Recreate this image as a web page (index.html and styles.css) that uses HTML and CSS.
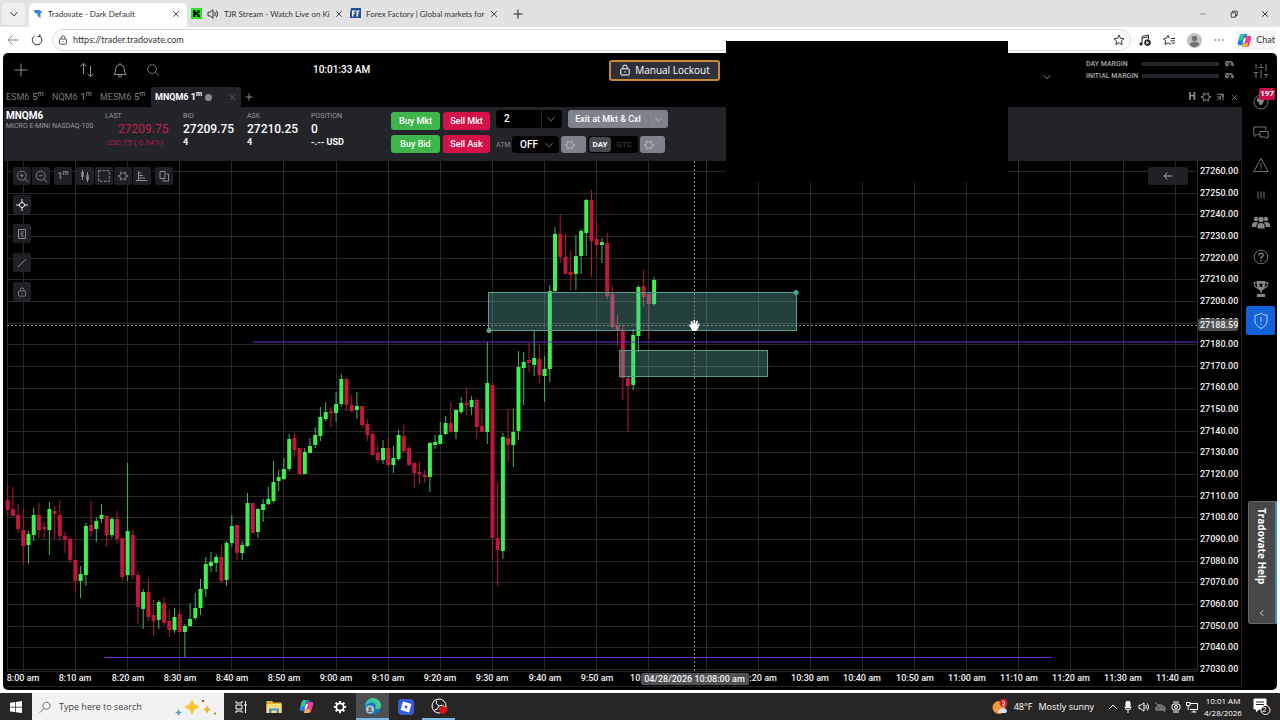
FILE: index.html
```html
<!DOCTYPE html>
<html lang="en">
<head>
<meta charset="utf-8">
<title>Tradovate - Dark Default</title>
<link rel="stylesheet" href="styles.css">
</head>
<body>
<svg class="defs" width="0" height="0" aria-hidden="true">
  <defs>
    <symbol id="chev" viewBox="0 0 10 10"><path d="M1.5 3.2 5 6.8 8.5 3.2"/></symbol>
    <symbol id="x" viewBox="0 0 10 10"><path d="M1.5 1.5 8.500 8.500M8.500 1.500 1.500 8.500"/></symbol>
    <symbol id="plus" viewBox="0 0 10 10"><path d="M5 .5V9.500M.5 5H9.500"/></symbol>
    <symbol id="search" viewBox="0 0 16 16"><circle cx="7" cy="7" r="5"/><path d="M10.700 10.700 14.500 14.500"/></symbol>
    <symbol id="lock" viewBox="0 0 12 12"><rect x="1.800" y="4.800" width="8.400" height="6.200" rx="1"/><path d="M3.800 4.800V3.200a2.200 2.200 0 0 1 4.400 0V4.800M6 7.200V8.600"/></symbol>
    <symbol id="gear" viewBox="0 0 16 16"><path stroke-width="1.500" d="M12 6.600 15.200 7V9L12 9.400 11.200 10.900 12.500 13.700 10.700 14.700 8.900 12.200H7.100L5.300 14.700 3.500 13.700 4.800 10.900 4 9.400.8 9V7L4 6.600 4.800 5.100 3.500 2.300 5.300 1.300 7.100 3.800H8.900L10.700 1.300 12.500 2.300 11.200 5.100Z"/></symbol>
    <symbol id="star" viewBox="0 0 12 12"><path d="M6 1 7.500 4.300 11 4.700 8.400 7.100 9.100 10.600 6 8.900 2.900 10.600 3.600 7.100 1 4.700 4.500 4.300Z"/></symbol>
    <symbol id="copilot" viewBox="0 0 16 16">
      <path fill="#1c7fe0" stroke="none" d="M5.500 1H11L8 11.500Q7.500 13 6 13H3Q0 13 1 9.500L3 3Q3.600 1 5.500 1Z"/>
      <path fill="#35c28e" stroke="none" d="M1.500 8 3 3Q3.600 1 5.500 1H8L6 8Z"/>
      <path fill="#e6438f" stroke="none" d="M10 3h3q3 0 2 3.500l-2 6.500q-.6 2-2.500 2H5.500L8.500 5Q9 3 10 3Z"/>
      <path fill="#ffad4a" stroke="none" d="M6 11h6l-.8 2.500Q10.500 15 9 15H5.500Z"/>
      <path fill="#fff" stroke="none" d="M7.500 5.500H9.500L8 10.500H6Z"/>
    </symbol>
  </defs>
</svg>

<header class="tabstrip">
  <button class="tab-list" aria-label="Tab list"><svg class="i10"><use href="#chev"/></svg></button>
  <div class="btab active">
    <svg class="i10 flat" viewBox="0 0 10 10"><path fill="#3f7fdc" d="M.5 1H6.500L9.500 3 7.500 4V9L4.500 7V4.500L2.500 4.500Z"/></svg>
    <span>Tradovate - Dark Default</span>
    <button aria-label="Close tab"><svg class="i8"><use href="#x"/></svg></button>
  </div>
  <div class="btab stream">
    <svg class="i11 flat" viewBox="0 0 11 11"><path fill="#2be323" d="M0 0H11V11H0Z"/><path fill="#071b07" d="M2 2H4.500V4H6V2.500H9V4.500H7.500V6.500H9V9H6V7H4.500V9H2Z"/></svg>
    <svg class="i12" viewBox="0 0 12 12"><path d="M1 4.200H3L6 1.800V10.200L3 7.800H1ZM7.800 4q1 2 0 4M9.500 2.500q2 3.500 0 7"/></svg>
    <span>TJR Stream - Watch Live on Ki</span>
    <button aria-label="Close tab"><svg class="i8"><use href="#x"/></svg></button>
  </div>
  <div class="btab forex">
    <svg class="i11 flat" viewBox="0 0 11 11"><path fill="#264f91" d="M1 0H11V10H0V5Z"/><path fill="#fff" d="M2 2.500H5.500V3.700H3.500V5H5V6H3.500V8.500H2ZM6.500 2.500H9.500V3.700H8V5H9V6H8V8.500H6.500Z"/></svg>
    <span>Forex Factory | Global markets for</span>
    <button aria-label="Close tab"><svg class="i8"><use href="#x"/></svg></button>
  </div>
  <button class="new-tab" aria-label="New tab"><svg class="i10"><use href="#plus"/></svg></button>
  <div class="win">
    <button aria-label="Minimize"><svg class="i8 dim" viewBox="0 0 10 10"><path d="M1 5H9"/></svg></button>
    <button aria-label="Restore"><svg class="i8" viewBox="0 0 10 10"><path d="M1.500 3.500H7V9H1.500ZM3 3.500V1.500H9V7H7"/></svg></button>
    <button aria-label="Close"><svg class="i8"><use href="#x"/></svg></button>
  </div>
</header>

<nav class="address">
  <button aria-label="Back"><svg class="i12 mid" viewBox="0 0 12 12"><path d="M11.500 6H1M5 2 1 6 5 10"/></svg></button>
  <button aria-label="Reload"><svg class="i12" viewBox="0 0 12 12"><path d="M8.500 1.900A4.800 4.800 0 1 1 3.600 1.900M8.800.2V2.500H6.500"/></svg></button>
  <div class="urlbox">
    <svg class="i10"><use href="#lock"/></svg>
    <input type="text" aria-label="Address" value="https://trader.tradovate.com">
    <button aria-label="Favorite"><svg class="i12"><use href="#star"/></svg></button>
  </div>
  <button aria-label="Media"><svg class="i12" viewBox="0 0 12 12"><path d="M3 10V2.500L9.500 1V5M3 4.300 9.500 2.800"/><circle cx="2" cy="10" r="1.200" fill="#222"/><circle cx="8.500" cy="8.600" r="2.900" fill="#111"/><path stroke="#fff" d="M7.700 7.500 9.800 8.600 7.700 9.700Z"/></svg></button>
  <button aria-label="Favorites"><svg class="i12" viewBox="0 0 12 12"><path d="M8 10.500 5 8.800 2 10.500 2.600 7 .5 4.800 3.500 4.300 5 1.300 6.500 4.300M8 4.500H12M7.500 6.800H12M8.500 9H12"/></svg></button>
  <button aria-label="Profile"><svg class="avatar flat" viewBox="0 0 16 16"><circle cx="8" cy="8" r="8" fill="#c4c2c0"/><circle cx="8" cy="5.800" r="3" fill="#747271"/><path fill="#747271" d="M2.800 12.300Q3 9.500 8 9.500T13.200 12.300Q11 15 8 15T2.800 12.300Z"/></svg></button>
  <button aria-label="More"><svg class="i10 flat" viewBox="0 0 10 10"><circle cx="1.200" cy="5" r=".7"/><circle cx="5" cy="5" r=".7"/><circle cx="8.800" cy="5" r=".7"/></svg></button>
  <button class="chat"><svg class="i15"><use href="#copilot"/></svg>Chat</button>
</nav>

<main class="app">
  <div class="work">
    <div class="topbar">
      <button class="t-add" aria-label="Add"><svg class="i14" viewBox="0 0 14 14"><path d="M7 .5V13.500M.5 7H13.500"/></svg></button>
      <button class="t-icon" aria-label="Orders"><svg class="i16" viewBox="0 0 16 16"><path d="M4.500 12V1.500M1.500 4.500 4.500 1.200 7.500 4.500M11.500 4V14.500M8.500 11.500 11.500 14.800 14.500 11.500"/></svg></button>
      <button class="t-icon" aria-label="Alerts"><svg class="i16" viewBox="0 0 16 16"><path d="M2 12.500Q3.800 10.500 3.800 6.500 4 3 8 2.500 12 3 12.200 6.500 12.200 10.500 14 12.500ZM6.300 13Q6.500 15 8 15T9.700 13M8 2.500V1"/></svg></button>
      <button class="t-icon" aria-label="Search"><svg class="i14"><use href="#search"/></svg></button>
      <time class="clock">10:01:33 AM</time>
      <button class="lockout"><svg class="i12"><use href="#lock"/></svg>Manual Lockout</button>
      <div class="account">
        <button aria-label="Account menu"><svg class="i10"><use href="#chev"/></svg></button>
        <div class="margins">
          <span>DAY MARGIN</span><i></i><b>0%</b>
          <span>INITIAL MARGIN</span><i></i><b>0%</b>
        </div>
      </div>
    </div>

    <div class="ctabs">
      <button>ESM6 <strong>5<sup>m</sup></strong></button>
      <button>NQM6 <strong>1<sup>m</sup></strong></button>
      <button>MESM6 <strong>5<sup>m</sup></strong></button>
      <div class="ctab-on"><button><span>MNQM6 1<sup>m</sup></span></button><i class="dot"></i><button class="cl" aria-label="Close chart"><svg class="i7"><use href="#x"/></svg></button></div>
      <button class="addc" aria-label="Add chart"><svg class="i8"><use href="#plus"/></svg></button>
      <div class="ctools">
        <button><b>H</b></button>
        <button aria-label="Settings"><svg class="i10"><use href="#gear"/></svg></button>
        <button aria-label="Pop out"><svg class="i8" viewBox="0 0 10 10"><path d="M1 1.500H9V9M1 5H5.500V9M1 9.500 8.500 2M5.500 2H8.500V5"/></svg></button>
        <button aria-label="Close"><svg class="i7"><use href="#x"/></svg></button>
      </div>
    </div>

    <section class="quote">
      <div class="q name"><strong>MNQM6</strong><small>MICRO E-MINI NASDAQ-100</small></div>
      <div class="q last"><small>LAST</small><span class="big">27209.75</span><span class="sub">-230.75 (-0.84%)</span></div>
      <div class="q"><small>BID</small><span class="big">27209.75</span><b class="sub">4</b></div>
      <div class="q"><small>ASK</small><span class="big">27210.25</span><b class="sub">4</b></div>
      <div class="q pos"><small>POSITION</small><span class="big">0</span><b class="sub">-.-- USD</b></div>
      <div class="trade">
        <button class="buy">Buy Mkt</button><button class="sell">Sell Mkt</button>
        <button class="buy">Buy Bid</button><button class="sell">Sell Ask</button>
      </div>
      <div class="order">
        <div class="orow">
          <label class="pick qty"><select aria-label="Quantity"><option>2</option></select><svg class="i10"><use href="#chev"/></svg></label>
          <button class="exit"><span>Exit at Mkt &amp; Cxl</span><svg class="i10"><use href="#chev"/></svg></button>
        </div>
        <div class="orow low">
          <label class="atm" for="atm">ATM</label>
          <span class="pick off"><select id="atm"><option>OFF</option></select><svg class="i10"><use href="#chev"/></svg></span>
          <button class="gbtn" aria-label="ATM settings"><svg class="i10"><use href="#gear"/></svg></button>
          <div class="tif"><button class="on">DAY</button><button>GTC</button></div>
          <button class="gbtn" aria-label="Order settings"><svg class="i10"><use href="#gear"/></svg></button>
        </div>
      </div>
    </section>

    <section class="chart">
      <svg id="plot" viewBox="4 161 1238 529" preserveAspectRatio="xMinYMin meet" role="img" aria-label="MNQM6 one minute candles"></svg>
      <div class="ctl">
        <div><button aria-label="Zoom in"><svg class="i13" viewBox="0 0 16 16"><circle cx="7" cy="7" r="5.500"/><path d="M11 11 15 15M7 4.500V9.500M4.500 7H9.500"/></svg></button><button aria-label="Zoom out"><svg class="i13" viewBox="0 0 16 16"><circle cx="7" cy="7" r="5.500"/><path d="M11 11 15 15M4.500 7H9.500"/></svg></button></div>
        <div><button class="tf"><span>1<sup>m</sup></span></button></div>
        <div>
          <button aria-label="Chart type"><svg class="i12" viewBox="0 0 12 12"><path d="M3.500 0V10M8.500 2V12"/><path stroke-width="2.500" d="M3.500 2V7M8.500 5V10"/></svg></button>
          <button aria-label="Selection"><svg class="i12" viewBox="0 0 12 12"><path stroke-dasharray="2.500 1.500" d="M.7.700H11.300V11.300H.7Z"/></svg></button>
          <button aria-label="Settings"><svg class="i10"><use href="#gear"/></svg></button>
          <button aria-label="Profile"><svg class="i12" viewBox="0 0 12 12"><path d="M2.500 1V10.500H11M2.500 3H5.500M2.500 5.500H7M2.500 8H9M0 10.500H2"/></svg></button>
        </div>
        <div><button aria-label="Layers"><svg class="i12" viewBox="0 0 12 12"><path d="M2 1.500H7V8.500H2ZM8.500 4H10.500V11H5V9.500"/></svg></button></div>
      </div>
      <div class="draw">
        <button class="lit" aria-label="Crosshair"><svg class="i12" viewBox="0 0 12 12"><circle cx="6" cy="6" r="2.500"/><path d="M6 0V4M6 8V12M0 6H4M8 6H12"/></svg></button>
        <button aria-label="Notes"><svg class="i12" viewBox="0 0 12 12"><path d="M2.500 1.500H9.500V10.500H2.500ZM4.500 4H7.500M4.500 6H7.500M4.500 8H7.500"/></svg></button>
        <button aria-label="Line"><svg class="i12" viewBox="0 0 12 12"><path d="M2 10 10 2"/></svg></button>
        <button aria-label="Lock drawings"><svg class="i10"><use href="#lock"/></svg></button>
      </div>
      <button class="back" aria-label="Collapse"><svg class="i10" viewBox="0 0 10 10"><path d="M9.500 5H1M4.500 1.500 1 5 4.500 8.500"/></svg></button>
    </section>
  </div>

  <aside class="rail">
    <button aria-label="Filters"><svg class="i16" viewBox="0 0 16 16"><path d="M3 1V6M3 9.500V15M8 1V3.500M8 7V15M13 1V8M13 11.500V15M.8 9.500H5.200M5.800 4.500H10.200M10.800 11.500H15.200"/></svg></button>
    <button class="r30" aria-label="Community"><svg class="i16" viewBox="0 0 16 16"><circle cx="8" cy="8" r="7"/><path fill="#8a8a8a" d="M5 4 9 3 11 6 9 10 7 11 6 8 4 7Z"/></svg><em>197</em></button>
    <button aria-label="Chat"><svg class="i16" viewBox="0 0 16 16"><path d="M6.500 9.500H4L2 11.500V9.500H.8V2H13V5M7 6.500H15.200V12H14V13.500L12 12H7Z"/></svg></button>
    <button aria-label="Warnings"><svg class="i16" viewBox="0 0 16 16"><path d="M8 1.500 15.200 14.500H.8ZM8 6V10.500M8 11.500V13"/></svg></button>
    <button class="r28" aria-label="Bars"><svg class="i8" viewBox="0 0 8 8"><path d="M1 .5V7.500M4 .5V7.500M7 .5V7.500"/></svg></button>
    <button class="r28" aria-label="People"><svg class="i18 solid" viewBox="0 0 18 16"><circle cx="4" cy="4" r="2.200"/><circle cx="14" cy="4" r="2.200"/><path d="M0 12V9Q1 7 4 7T7 9V12ZM11 12V9Q11.500 7 14 7T18 9V12Z"/><path stroke="#000" d="M5 14V10Q5.500 7.500 9 7.500T13 10V14Z"/><circle cx="9" cy="4.500" r="2.700"/></svg></button>
    <button class="r40" aria-label="Help"><svg class="i16" viewBox="0 0 16 16"><circle cx="8" cy="8" r="6.800"/><path stroke-width="1.500" d="M5.800 6.500Q6 4.200 8 4.200T10.200 6.200Q10.200 7.300 8 8.500V10M8 11V12.500"/></svg></button>
    <button class="r24" aria-label="Contests"><svg class="i18 solid" viewBox="0 0 18 20"><path fill="none" stroke-width="1.300" d="M5 3H1.500Q1.500 8 5.500 9M13 3H16.500Q16.500 8 12.500 9"/><path d="M4.500 1H13.500V6Q13 11 10 11.500V14H8V11.500Q5 11 4.500 6ZM4.500 15.500H13.500V19H4.500Z"/><path fill="#000" d="M9 3 9.800 4.800 11.500 5 10.200 6.300 10.500 8 9 7.200 7.500 8 7.800 6.300 6.500 5 8.200 4.800Z"/></svg></button>
    <button class="shield" aria-label="Risk settings"><svg class="i18" viewBox="0 0 18 18"><path d="M9 1.500Q12 3.200 15 3.200V9Q14.500 14 9 16.500 3.500 14 3 9V3.200Q6 3.200 9 1.500ZM9 5V10M9 11.500V13"/></svg></button>
    <button class="help"><span>Tradovate Help</span><svg class="i8" viewBox="0 0 10 10"><path d="M6.500 1.500 3 5 6.500 8.500"/></svg></button>
  </aside>
</main>

<div class="mask"></div>

<footer class="taskbar">
  <button class="start" aria-label="Start"><svg class="i12 flat" viewBox="0 0 12 12"><path fill="#fff" d="M0 1.700 5.300 1V5.700H0ZM6 .9 12 0V5.700H6ZM0 6.400H5.300V11.100L0 10.400ZM6 6.400H12V12L6 11.200Z"/></svg></button>
  <label class="find"><svg class="i12"><path transform="scale(.75)" d="M10 1.500a4.800 4.800 0 1 1-.01 0M6.500 10 1 15.500"/></svg><input type="text" placeholder="Type here to search" aria-label="Search">
    <svg class="spark flat" viewBox="0 0 42 18"><path fill="#f7c530" d="M17 1 19.500 6.500 25 9 19.500 11.500 17 17 14.500 11.500 9 9 14.500 6.500Z"/><path fill="#e9b93a" d="M32 7 33.300 10 36 11.500 33.300 13 32 16 30.700 13 28 11.500 30.700 10Z"/><path fill="#49a4cf" d="M3.500 11 4.600 13.400 7 14.500 4.600 15.600 3.500 18 2.400 15.600 0 14.500 2.400 13.400Z"/><circle cx="28" cy="3" r="1.300" fill="#b5532a"/><circle cx="40" cy="15.500" r="1.300" fill="#b99a4a"/></svg></label>
  <button aria-label="Task view"><svg class="i14" viewBox="0 0 14 14"><path d="M2 1V3H8V1M2 5H8V9H2ZM2 13V11H8V13M11.500 1V13"/><path stroke-width="2" d="M10.500 5H12.500"/></svg></button>
  <button aria-label="File Explorer"><svg class="i16 flat" viewBox="0 0 16 16"><path fill="#e5ad32" d="M.5 2H6L7.500 3.500H15.500V14H.5Z"/><path fill="#fbdc7c" d="M.5 5H15.500V14H.5Z"/><path fill="#3f93d6" d="M3 14V9.500H13V14H10.500V11.500H5.500V14Z"/></svg></button>
  <button aria-label="Copilot"><svg class="i15"><use href="#copilot"/></svg></button>
  <button aria-label="Settings"><svg class="i14" viewBox="0 0 16 16"><circle cx="8" cy="8" r="4.200" stroke-width="2"/><path stroke-width="2.200" d="M8 1V3.500M8 12.500V15M1 8H3.500M12.500 8H15M3 3 4.800 4.800M11.200 11.200 13 13M13 3 11.200 4.800M4.800 11.200 3 13"/></svg></button>
  <button class="cur run" aria-label="Edge"><svg class="i18 flat" viewBox="0 0 18 18"><circle cx="9" cy="9" r="8.200" fill="#1677c4"/><path fill="#4bd080" d="M3 4Q7-.5 12.500 2 17.500 4.500 17 10 15 13.500 11 11.500 13 8 10 6 6 4 1.500 8Q1.500 6 3 4Z"/><path fill="#2cb9d3" d="M1 9Q3 3 9 3.500 12 4 13 7 10 4 6 6 3 7 1 9Z"/><circle cx="6" cy="12.500" r="4" fill="#bcc5cb"/><circle cx="6" cy="11.500" r="1.500" fill="#666"/><path fill="#666" d="M3.500 15Q4 13 6 13T8.500 15Z"/></svg></button>
  <button aria-label="Roblox"><svg class="i16 flat" viewBox="0 0 16 16"><rect width="16" height="16" rx="4" fill="#345be0"/><path fill="#fff" fill-rule="evenodd" d="M5 2.500 13.500 5 11 13.500 2.500 11ZM7 6.500 6.500 9 9 9.600 9.600 7.100Z"/></svg></button>
  <button class="run" aria-label="OBS"><svg class="i16" viewBox="0 0 16 16"><circle cx="8" cy="8" r="7" fill="#222"/><path d="M8 8Q4 6 5.500 2.500M8 8Q12 6 14 9M8 8Q7 12 3.500 12"/><circle cx="12" cy="12" r="3.800" fill="#e60a10" stroke="none"/></svg></button>
  <div class="weather"><svg class="i16 flat" viewBox="0 0 16 16"><circle cx="7" cy="8.500" r="6.500" fill="#f29a35"/><path fill="#d9def0" d="M7 14Q5 13 7 11 8 8.500 11 9.500 15 9.500 15 12 15 14 13 14Z"/><circle cx="11.500" cy="4" r="4" fill="#d3222b"/><path fill="none" stroke="#fff" d="M10.300 3Q11.500 1.500 12.500 3T10.300 6H13"/></svg><span>48°F</span><span>Mostly sunny</span></div>
  <div class="tray">
    <svg class="i10" viewBox="0 0 10 10"><path d="M1 7 5 3 9 7"/></svg>
    <svg class="i12" viewBox="0 0 12 12"><rect x="4" y="0" width="4" height="7" rx="2" fill="#fff"/><path d="M3 5.500Q3 9 6 9T9 5.500M6 9V12"/></svg>
    <svg class="i12" viewBox="0 0 12 12"><path d="M1 4.200H3L6 1.800V10.200L3 7.800H1ZM7.800 4q1 2 0 4M9.500 2.500q2 3.500 0 7"/></svg>
    <svg class="i12 dim" viewBox="0 0 12 12"><path fill="#999" d="M2 9Q0 7 3 5.500 5 2 8 4.500 12 5.500 11 9Z"/><path stroke="#eee" d="M1 1 11 11"/></svg>
    <svg class="i12" viewBox="0 0 12 12"><rect x="2" y="3" width="8" height="6" rx="2"/><circle cx="6" cy="6" r="1.500"/><path d="M3 1H9M3 11H9"/></svg>
    <svg class="i12" viewBox="0 0 12 12"><path d="M4 2.500H11.500V8.500H4M8 8.500V11M5.500 11H10.500M.5 1.500H4V4.500H.5ZM2.200 4.500V9"/></svg>
  </div>
  <div class="date"><span>10:01 AM</span><span>4/28/2026</span></div>
  <button class="note" aria-label="Notifications"><svg class="i18" viewBox="0 0 18 18"><path fill="#fff" d="M1 1H13V11H6L3.500 13.500V11H1Z"/><path stroke="#222" d="M3 4H11M3 6.500H11"/><circle cx="12.500" cy="12" r="4.500" fill="#222"/></svg><em>2</em></button>
</footer>
<script src="chart.js"></script>
</body>
</html>
```
FILE: styles.css
```css
* { box-sizing: border-box; }
body {
  margin: 0; min-height: 100vh; display: flex; flex-direction: column;
  background: #fff; color: #fff; position: relative;
  font: 9px/12px Roboto, "Liberation Sans", sans-serif;
}
button, input, select { font: inherit; color: inherit; background: none; border: 0; padding: 0; margin: 0; appearance: none; }
button { display: inline-flex; align-items: center; justify-content: center; white-space: nowrap; }
svg { fill: none; stroke: currentColor; stroke-width: 1; flex: none; display: block; }
.flat { stroke: none; fill: currentColor; }
.defs { position: absolute; }
sup { font-size: 7px; line-height: 7px; vertical-align: 4px; }
.i7 { width: 7px; height: 7px; } .i8 { width: 8px; height: 8px; }
.i10 { width: 10px; height: 10px; } .i11 { width: 11px; height: 11px; }
.i12 { width: 12px; height: 12px; } .i13 { width: 13px; height: 13px; }
.i14 { width: 14px; height: 14px; } .i15 { width: 15px; height: 15px; }
.i16 { width: 16px; height: 16px; } .i18 { width: 18px; height: 18px; }
.dim { opacity: .5; }

.tabstrip { display: flex; height: 27px; background: #e2e2e2; color: #222; font-family: Lato, "Noto Sans", sans-serif; font-size: 8px; }
.tab-list { width: 23px; margin: 3px 4px 2px 2px; background: #efefef; border-radius: 4px; }
.btab { display: flex; align-items: center; gap: 5px; color: #333; }
.btab span { flex: 1; white-space: nowrap; }
.btab button { color: #222; width: 12px; }
.btab.active { width: 158px; margin-top: 3px; padding: 0 5px 3px 4px; background: #fff; border-radius: 5px 5px 0 0; }
.stream { width: 157px; padding: 0 5px 0 4px; }
.forex { width: 160px; padding: 0 5px 0 6px; }
.new-tab { width: 24px; margin-left: 2px; }
.win { display: flex; margin-left: auto; }
.win button { width: 31px; }

.address { display: flex; align-items: center; height: 26px; padding: 0 4px 0 7px; gap: 12px; color: #333; font-family: Lato, "Noto Sans", sans-serif; font-size: 9px; }
.mid { opacity: .6; }
.urlbox { flex: 1; display: flex; align-items: center; gap: 5px; height: 22px; padding: 0 5px; border: 1px solid #d8d8d8; border-radius: 11px; margin: 0 -4px 0 -3px; }
.urlbox input { flex: 1; min-width: 0; color: #333; }
.avatar { width: 15px; height: 15px; }
.chat { gap: 4px; padding: 0 1px; height: 20px; background: #f5f5f5; border-radius: 4px; }

.app { flex: 1; display: flex; margin: 0 3px 3px; background: #000; border-radius: 5px; overflow: hidden; min-height: 0; }
.work { flex: 1; min-width: 0; display: flex; flex-direction: column; padding-left: 1px; }
.topbar { display: flex; align-items: center; height: 34px; color: #8c8c8c; }
.t-add { width: 34px; margin-right: 32px; }
.t-icon { width: 33px; }
.clock { width: 58px; margin-left: 144px; color: #fff; font-size: 10px; font-weight: 500; white-space: nowrap; }
.lockout { margin-left: 238px; height: 21px; width: 111px; gap: 4px; color: #fff; font: 10px/12px "Open Sans", sans-serif; background: #2e303a; border: 2px solid #c98b31; border-radius: 3px; }
.account { display: flex; align-items: center; gap: 34px; margin-left: auto; padding-right: 7px; }
.account > button { margin-top: 14px; }
.margins { display: grid; grid-template-columns: 50px 77px 10px; column-gap: 6px; align-items: center; font-size: 7px; font-weight: 500; color: #aaa; white-space: nowrap; }
.margins i { height: 4px; background: #24262b; }

.ctabs { display: flex; height: 20px; color: #77797d; font-size: 10px; }
.ctabs > button { width: 48px; font-size: 9px; justify-content: flex-start; }
.ctabs > button:first-child { padding-left: 2px; }
.ctabs > button:nth-child(3) { width: 51px; }
.ctabs strong { font-weight: 500; margin-left: 3px; }
.ctab-on { display: flex; align-items: center; width: 90px; padding: 0 5px 0 4px; gap: 3px; background: #222429; color: #fff; font-weight: 700; font-size: 9px; border-radius: 2px 2px 0 0; }
.dot { width: 7px; height: 7px; border-radius: 50%; background: #8b8c90; }
.cl { margin-left: auto; color: #777; }
.ctabs .addc { width: 15px; color: #aaa; justify-content: center; }
.ctools { display: flex; gap: 4px; margin-left: auto; padding-right: 3px; color: #999; }
.ctools button { width: 10px; }

.quote { display: flex; height: 54px; background: #222429; padding-left: 2px; white-space: nowrap; }
.q { display: flex; flex-direction: column; width: 64px; padding-top: 4px; }
.q small { font-size: 7px; line-height: 10px; color: #999; }
.q .big { font-size: 12px; line-height: 16px; font-weight: 500; }
.q .sub { font-size: 9px; line-height: 11px; }
.name { width: 99px; padding-top: 3px; }
.name strong { font-size: 10px; line-height: 12px; }
.q.name small { font-size: 7px; line-height: 8px; }
.last { width: 78px; color: #c51d4b; }
.last .big { font-weight: 400; padding-left: 13px; }
.last .sub { font-size: 8px; color: #a01f42; }
.pos { width: 80px; }
.trade { display: grid; grid-template: 18px 18px / 49px 47px; gap: 5px 3px; padding-top: 5px; }
.trade button, .exit { border-radius: 3px; font-size: 9px; font-weight: 500; }
.buy { background: #3db54a; } .sell { background: #d5114a; }
.order { padding: 3px 0 0 6px; }
.orow { display: flex; gap: 6px; height: 18px; }
.low { gap: 2px; margin-top: 8px; height: 17px; }
.pick { display: grid; align-items: center; background: #000; border-radius: 3px; }
.pick select { grid-area: 1 / 1; width: 100%; height: 100%; padding-left: 8px; font-size: 10px; font-weight: 500; }
.pick svg { grid-area: 1 / 1; justify-self: end; margin-right: 6px; color: #777; pointer-events: none; }
.qty { width: 66px; background: linear-gradient(90deg, #000 45px, #24262b 45px, #24262b 46px, #000 46px); }
.exit { width: 100px; background: #7e828d; }
.exit span { flex: 1; }
.exit svg { width: 20px; height: 9px; color: #b3b6be; border-left: 1px solid #747883; }
.atm { color: #888; font-size: 7px; line-height: 18px; width: 14px; }
.off { width: 47px; }
.off svg { margin-right: 5px; }
.gbtn { width: 25px; background: #7e828d; border-radius: 3px; color: #b3b6be; justify-content: flex-start; padding-left: 4px; }
.tif { display: flex; width: 50px; background: #000; border-radius: 3px; padding: 1px; font-size: 8px; color: #4a4c52; }
.tif button { flex: 1; border-radius: 3px; }
.tif .on { background: #474950; color: #fff; flex: none; width: 22px; font-weight: 700; }

.chart { flex: 1; position: relative; min-height: 0; }
#plot { width: 100%; height: auto; stroke: none; font: 500 9px Roboto, sans-serif; }
#plot text { fill: #f1f1f1; }
.grid { stroke: #282828; }
.up { fill: #3df04c; } .down { fill: #c1173c; }
.wup { stroke: #3fb95b; } .wdown { stroke: #b41838; }
.zone { fill: rgba(100, 182, 175, .35); stroke: #5b9c90; }
.knob { fill: #55a593; }
.level { stroke: #7426d0; }
.cross { stroke: #858585; stroke-dasharray: 2 2; }
.pill { fill: #505154; }
.hand { fill: #fff; }
.ctl { position: absolute; left: 9px; top: 6px; display: flex; gap: 4px; color: #8c8e92; }
.ctl div { display: flex; gap: 1px; }
.ctl button, .draw button { width: 18px; height: 18px; background: #1e2025; border-radius: 2px; }
.tf { font-weight: 500; }
.draw { position: absolute; left: 9px; top: 34px; display: flex; flex-direction: column; gap: 10px; color: #85878c; }
.draw button { height: 19px; }
.draw .lit { color: #eee; }
.back { position: absolute; right: 54px; top: 6px; width: 40px; height: 18px; background: #1e2025; border-radius: 2px; color: #aaa; }

.rail { width: 35px; padding: 2px 0 0 4px; display: flex; flex-direction: column; align-items: flex-start; color: #777; }
.rail button { width: 29px; height: 32px; flex: none; position: relative; }
.rail .r30 { height: 30px; } .rail .r28 { height: 28px; } .rail .r40 { height: 40px; } .rail .r24 { height: 24px; }
.solid { fill: #858585; stroke: none; }
.solid [fill="none"] { stroke: #858585; }
.rail em { position: absolute; right: 0; top: 1px; padding: 0 1px; background: #c51148; color: #fff; border-radius: 2px; font: 700 8px/12px Roboto, sans-serif; }
.rail .shield { height: 29px; margin-top: 5px; background: #1161d8; color: #b9d2f5; border-radius: 2px; }
.rail .help { height: 123px; margin: auto 0 66px 2px; padding: 6px 0; background: #474747; border: 1px solid #666; border-right: 2px solid #3d8fc0; border-radius: 3px 0 0 3px; color: #fff; flex-direction: column; justify-content: space-between; }
.help span { writing-mode: vertical-rl; font: 700 10px/14px "Open Sans", sans-serif; }

.mask { position: absolute; left: 726px; top: 41px; width: 282px; height: 141px; background: #000; }

.taskbar { display: flex; height: 27px; background: #272624; font-family: "Open Sans", "Noto Sans", sans-serif; font-size: 9px; }
.taskbar > button { width: 33px; }
.taskbar .start { width: 32px; }
.find { display: flex; align-items: center; gap: 8px; width: 192px; padding: 0 7px; background: #f2f2f2; color: #444; }
.find input { flex: 1; min-width: 0; }
.find input::placeholder { color: #444; opacity: 1; }
.spark { width: 42px; height: 18px; }
.cur { background: #4d5052; }
.run { border-bottom: 2px solid #78b7e3; }
.weather { display: flex; align-items: center; gap: 6px; margin-left: auto; white-space: nowrap; }
.tray { display: flex; align-items: center; gap: 4px; margin-left: 14px; }
.date { display: flex; flex-direction: column; align-items: center; width: 42px; margin-left: 4px; font-size: 8px; line-height: 12px; padding-top: 2px; }
.taskbar .note { width: 36px; position: relative; }
.note em { position: absolute; left: 18px; top: 11px; font: 8px/10px "Open Sans", sans-serif; }
```
FILE: chart.js
```js
// One entry per minute from 7:57: direction, high, body top, body bottom, low (plot units).
const bars = `r485,500,510,517 r487,509,516,516 r504,515,529,533 r509,530,546,565 g531,534,545,564
g508,515,535,541 r503,515,530,538 r522,527,529,539 g502,509,530,555 r506,511,514,539 r500,515,536,541
r532,536,540,553 r537,539,560,563 r560,560,581,592 g566,574,581,598 g523,526,575,586 r501,525,531,537
g517,521,529,542 g504,515,519,523 r515,516,535,547 g517,519,535,538 r511,519,539,543 r538,538,577,581
g463,531,575,581 r530,535,575,579 r571,575,607,624 g589,592,609,629 r578,592,617,621 r600,615,621,636
g600,602,620,629 r597,603,623,625 r610,621,630,637 g608,617,630,633 r609,614,632,633 g624,626,632,657
g603,619,626,627 g593,608,618,620 g579,589,608,615 g557,564,589,597 g552,562,566,572 g554,557,563,572
r545,557,581,583 g541,543,580,586 g515,526,543,547 r525,525,553,560 g541,545,553,560 g493,503,546,547
r503,503,533,533 g508,509,532,538 g499,504,510,522 g487,499,504,505 g461,482,501,503 g470,477,481,491
g458,469,479,480 g434,439,469,471 r433,438,450,458 r448,448,474,475 g448,452,474,474 g438,446,453,453
g427,435,445,448 g407,417,436,441 g402,412,419,421 r407,411,413,427 g392,404,413,422 g374,379,404,407
r378,379,405,411 r395,405,411,412 g392,406,410,419 r406,406,425,428 r419,424,435,441 r431,434,455,455
r445,453,460,463 g440,448,460,464 r437,448,465,467 g446,458,465,473 g430,435,459,461 r425,436,451,453
r446,448,465,466 r463,463,473,488 r462,472,474,484 r470,475,477,483 g442,443,477,492 g435,442,445,449
g422,435,444,444 g416,423,434,435 r402,423,432,433 g409,410,432,439 g397,403,412,414 r388,403,405,415
g396,400,407,415 r398,400,427,439 r409,426,432,432 g342,383,432,444 r382,385,538,560 r482,538,550,586
g433,437,551,559 r409,438,445,462 g409,432,445,467 g351,367,431,440 g352,362,368,405 r343,360,363,372
g330,358,365,376 r345,359,375,383 g356,369,376,402 g285,291,369,382 g227,234,291,293 r214,234,257,263
r234,257,274,274 r251,272,275,291 g235,256,274,290 g229,231,256,274 g199,200,233,256 r190,200,241,277
r222,239,245,258 g238,242,245,263 r233,243,296,299 r286,294,327,329 r315,326,330,347 r325,331,378,400
r377,378,386,432 g329,335,385,390 g285,287,336,352 r270,286,297,307 r293,294,304,339 g277,280,304,306`.split(/\s+/);

const step = 5.213;
const line = (cls, x1, y1, x2, y2) => `<line class="${cls}" x1="${x1}" y1="${y1}" x2="${x2}" y2="${y2}"/>`;
const priceY = p => 171.5 + (27260 - p) * 2.165;
let out = '';

for (let p = 27260; p >= 27030; p -= 10) {
  const y = Math.floor(priceY(p)) + 0.5;
  out += line('grid', 7, y, 1197, y);
  out += `<text x="1200" y="${Math.round(priceY(p) + 2.4)}">${p}.00</text>`;
}
for (let k = 0; k < 23; k++) {
  const minutes = 480 + k * 10;
  const x = k < 13 ? 23.3 + k * 52.13 : 706 + (k - 13) * 52.13;
  const gx = Math.floor(x) + 0.5;
  out += line('grid', gx, 161, gx, 671);
  // 10:10 lies wholly under the cursor's time pill.
  if (k === 13) continue;
  const hour = (Math.floor(minutes / 60) + 11) % 12 + 1;
  out += `<text x="${Math.round(x)}" y="681" text-anchor="middle">${hour}:${String(minutes % 60).padStart(2, '0')} am</text>`;
}
out += line('grid', 7.5, 161, 7.5, 671) + line('grid', 1197.5, 161, 1197.5, 671);
out += line('grid', 1241.5, 161, 1241.5, 686) + line('grid', 7, 671.5, 1197, 671.5) + line('grid', 7, 686.5, 1241, 686.5);

bars.forEach((bar, i) => {
  const [high, top, bottom, low] = bar.slice(1).split(',').map(Number);
  const x = 23.3 + (i - 3) * step;
  const up = bar[0] === 'g';
  out += line(up ? 'wup' : 'wdown', x.toFixed(1), high, x.toFixed(1), low);
  out += `<rect class="${up ? 'up' : 'down'}" x="${(x - 2).toFixed(1)}" y="${top}" width="4" height="${Math.max(2, bottom - top)}"/>`;
});

out += '<rect class="zone" x="488.5" y="292.5" width="308" height="38"/><rect class="zone" x="619.5" y="350.5" width="148" height="26"/>';
out += '<circle class="knob" cx="489" cy="330.5" r="2.500"/><circle class="knob" cx="796" cy="292.5" r="2.500"/>';
out += line('level', 253, 342, 1197, 342) + line('level', 104, 657.5, 1052, 657.5);
out += line('cross', 694.5, 161, 694.5, 671) + line('cross', 7, 325.5, 1197, 325.5);
out += '<rect class="pill" x="1198" y="319" width="40" height="12" rx="2"/><text x="1200" y="328">27188.59</text>';
out += '<rect class="pill" x="641" y="673" width="108" height="12" rx="2"/><text x="694.5" y="682" text-anchor="middle">04/28/2026 10:08:00 am</text>';
out += '<path class="hand" d="M689 325 691 324 692 326 690.500 321.500 692 321 693.500 324.500V320H695V324.500L696.500 320.500 698 321 697 325 699 323 699.500 324 698 329 696 331H692.500Z"/>';
document.getElementById('plot').innerHTML = out;
```
